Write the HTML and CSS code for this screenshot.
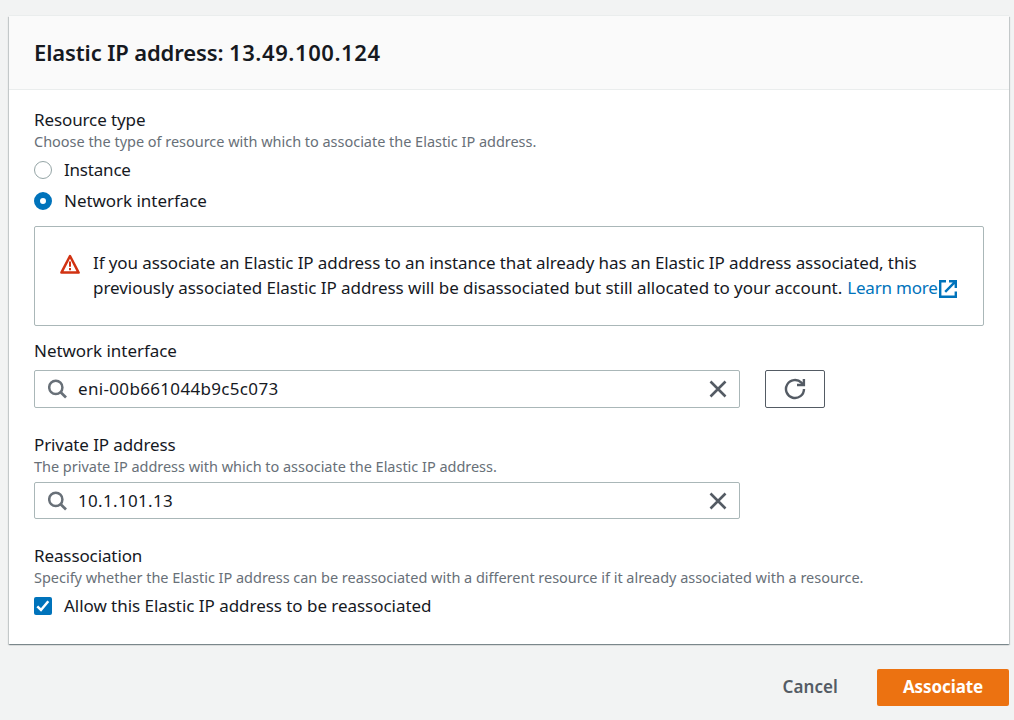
FILE: index.html
```html
<!DOCTYPE html>
<html lang="en">
<head>
<meta charset="utf-8">
<title>Associate Elastic IP address</title>
<link rel="stylesheet" href="styles.css">
</head>
<body>
<main class="page">
  <section class="card">
    <header class="card-header"><h2 class="title">Elastic IP address: <span class="title-ip">13.49.100.124</span></h2></header>
    <div class="card-body">
      <div class="label">Resource type</div>
      <div class="hint">Choose the type of resource with which to associate the Elastic IP address.</div>
      <label class="option"><span class="radio"></span><span class="t-instance">Instance</span></label>
      <label class="option option-second"><span class="radio radio-on"></span><span class="t-network">Network interface</span></label>
      <div class="alert">
        <svg class="warn" viewBox="0 0 20 20"><path d="M10 2 18.6 18.6H1.4Z" fill="none" stroke="#d13212" stroke-width="2.5" stroke-linejoin="round"/><path d="M10 7.5v5.3M10 14v2.2" fill="none" stroke="#d13212" stroke-width="2"/></svg>
        <div class="alert-text"><div class="line1">If you associate an Elastic IP address to an instance that already has an Elastic IP address associated, this</div><div class="line2"><span class="line2-text">previously associated Elastic IP address will be disassociated but still allocated to your account.</span> <a class="link">Learn more</a><svg class="external" viewBox="0 0 18 18"><path d="M7 1.2H1.2V16.8H16.8V11.5M10 1.2H16.8V8M16.3 1.7 6.2 11.8" fill="none" stroke="#0073bb" stroke-width="2.4"/></svg></div></div>
      </div>
      <div class="label label-eni t-network">Network interface</div>
      <div class="row">
        <div class="input">
          <svg class="search" viewBox="0 0 20 20"><circle cx="7.8" cy="8.4" r="6.6" fill="none" stroke="#687078" stroke-width="2.5"/><path d="M12.4 13 18 18.5" stroke="#687078" stroke-width="2.7"/></svg>
          <span class="value">eni-00b661044b9c5c073</span>
          <svg class="clear" viewBox="0 0 18 18"><path d="M1.5 1.5 16.5 16.5M16.5 1.5 1.5 16.5" stroke="#545b64" stroke-width="2.6"/></svg>
        </div>
        <button class="refresh"><svg class="refresh-icon" viewBox="0 0 22 22"><path d="M20 11A9 9 0 1 1 17.4 4.7L19 6.4" fill="none" stroke="#545b64" stroke-width="2.4"/><path d="M19.9 1V7H13" fill="none" stroke="#545b64" stroke-width="2.4"/></svg></button>
      </div>
      <div class="label label-ip">Private IP address</div>
      <div class="hint">The private IP address with which to associate the Elastic IP address.</div>
      <div class="input input-ip">
        <svg class="search" viewBox="0 0 20 20"><circle cx="7.8" cy="8.4" r="6.6" fill="none" stroke="#687078" stroke-width="2.5"/><path d="M12.4 13 18 18.5" stroke="#687078" stroke-width="2.7"/></svg>
        <span class="value">10.1.101.13</span>
        <svg class="clear" viewBox="0 0 18 18"><path d="M1.5 1.5 16.5 16.5M16.5 1.5 1.5 16.5" stroke="#545b64" stroke-width="2.6"/></svg>
      </div>
      <div class="label label-re">Reassociation</div>
      <div class="hint">Specify whether the Elastic IP address can be reassociated with a different resource if it already associated with a resource.</div>
      <label class="option"><svg class="checkbox" viewBox="0 0 18 18"><rect width="18" height="18" rx="2" fill="#0073bb"/><path d="M3.3 9.3 7 13 14.3 4.2" fill="none" stroke="#fff" stroke-width="2.5"/></svg><span class="t-network">Allow this Elastic IP address to be reassociated</span></label>
    </div>
  </section>
  <footer class="actions">
    <button class="cancel">Cancel</button>
    <button class="primary">Associate</button>
  </footer>
</main>
</body>
</html>
```
FILE: styles.css
```css
* { box-sizing: border-box; }
body { margin: 0; background: #f2f3f3; color: #16191f; font: 17px/22px "Noto Sans", sans-serif; white-space: nowrap; }
svg { display: block; flex: none; }
button { font: inherit; letter-spacing: inherit; padding: 0; border: 0; background: none; }
.page { height: 720px; padding: 16px 5px 0 9px; overflow: hidden; }
.card { height: 628px; background: #fff; box-shadow: 0 1px 1px 0 rgba(0,28,36,.3), 1px 1px 1px 0 rgba(0,28,36,.15), -1px 1px 1px 0 rgba(0,28,36,.15), 0 -1px 0 0 #eaeded; }
.card-header { height: 74px; padding: 21px 25px; background: #fafafa; border-bottom: 1px solid #eaeded; }
.title { margin: 0; font-size: 22px; line-height: 31px; font-weight: 600; letter-spacing: -.12px; }
.title-ip { letter-spacing: .58px; }
.card-body { padding: 19px 25px; }
.label { height: 22px; letter-spacing: -.11px; }
.hint { height: 20px; line-height: 20px; font-size: 14.5px; color: #687078; letter-spacing: -.025px; }
.option { display: flex; align-items: center; gap: 12px; height: 22px; letter-spacing: -.2px; margin-top: 8px; }
.option-second { margin-top: 9px; }
.t-network { letter-spacing: -.04px; }
.radio { width: 18px; height: 18px; border: 1.5px solid #95a5a6; border-radius: 50%; background: #fff; }
.radio-on { border: 6px solid #0073bb; }
.checkbox { width: 18px; height: 18px; }
.alert { display: flex; gap: 13px; height: 100px; margin-top: 14px; padding: 23px 25px; border: 1px solid #aab7b8; border-radius: 2px; line-height: 25px; letter-spacing: -.2px; }
.warn { width: 20px; height: 20px; margin-top: 4px; }
.line1 { letter-spacing: -.095px; }
.line2 { display: flex; }
.line2-text { letter-spacing: -.05px; }
.link { color: #0073bb; margin-left: 5px; }
.external { width: 18px; height: 18px; margin: 5px 0 0 1px; }
.label-eni { margin-top: 14px; }
.row { display: flex; gap: 25px; margin-top: 8px; }
.input { display: flex; align-items: center; width: 706px; height: 38px; padding: 0 12px 0 13px; border: 1px solid #aab7b8; border-radius: 2px; }
.search { width: 20px; height: 20px; margin-right: 10px; }
.value { flex: 1; letter-spacing: .33px; }
.clear { width: 18px; height: 18px; }
.refresh { display: grid; place-items: center; width: 60px; height: 38px; border: 1px solid #545b64; border-radius: 2px; }
.refresh-icon { width: 22px; height: 22px; }
.label-ip { margin-top: 26px; }
.input-ip { height: 37px; margin-top: 6px; }
.label-re { margin-top: 26px; }
.actions { display: flex; justify-content: flex-end; align-items: center; gap: 39px; height: 37px; margin-top: 25px; font-weight: 600; letter-spacing: .1px; }
.cancel { color: #545b64; padding-bottom: 2px; }
.primary { width: 132px; height: 37px; padding-bottom: 2px; border-radius: 2px; background: #ec7211; color: #fff; font-weight: 700; letter-spacing: -.1px; }
```
